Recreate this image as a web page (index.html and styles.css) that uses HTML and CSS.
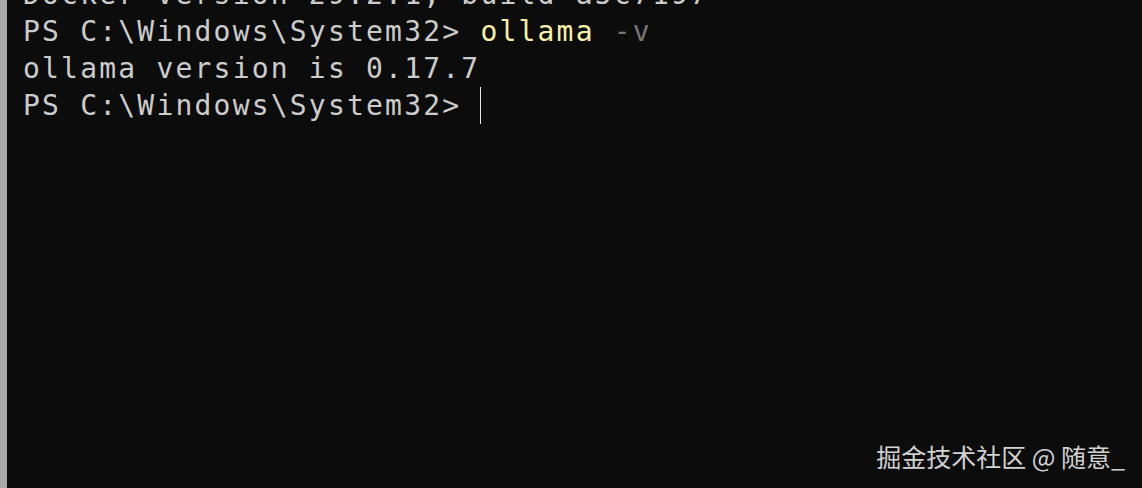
FILE: index.html
```html
<!DOCTYPE html>
<html lang="en">
<head>
<meta charset="utf-8">
<title>Windows PowerShell</title>
<link rel="stylesheet" href="styles.css">
</head>
<body>
<div class="window">
  <div class="edge"></div>
  <main class="terminal">
    <pre class="output"><span class="line">Docker version 29.2.1, build a5c7197</span>
<span class="line">PS C:\Windows\System32&gt; <span class="cmd">ollama</span> <span class="arg">-v</span></span>
<span class="line">ollama version is 0.17.7</span>
<span class="line">PS C:\Windows\System32&gt; <span class="cursor"></span></span></pre>
  </main>
  <div class="watermark">掘金技术社区 @ 随意_</div>
</div>
</body>
</html>
```
FILE: styles.css
```css
html, body {
  margin: 0;
  padding: 0;
  height: 100%;
  background: #0c0c0c;
  overflow: hidden;
}

.window {
  position: relative;
  display: flex;
  height: 488px;
  width: 1142px;
}

.edge {
  width: 7px;
  flex: none;
  background: #a9a9a9;
}

.terminal {
  flex: 1;
  background: #0c0c0c;
  padding-left: 16px;
  overflow: hidden;
}

.output {
  margin: -24px 0 0 0;
  font-family: "DejaVu Sans Mono", "Liberation Mono", monospace;
  font-size: 28px;
  letter-spacing: 2.2px;
  line-height: 37px;
  color: #cccccc;
  white-space: pre;
}

.cmd {
  color: #f9f1a5;
}

.arg {
  color: #767676;
}

.cursor {
  display: inline-block;
  width: 1px;
  height: 37px;
  background: #e6e6e6;
  vertical-align: top;
}

.watermark {
  position: absolute;
  right: 17px;
  top: 443px;
  font-family: "Noto Sans CJK SC", "Noto Sans", sans-serif;
  font-size: 25px;
  line-height: 26px;
  color: #d2d2d2;
}
```
